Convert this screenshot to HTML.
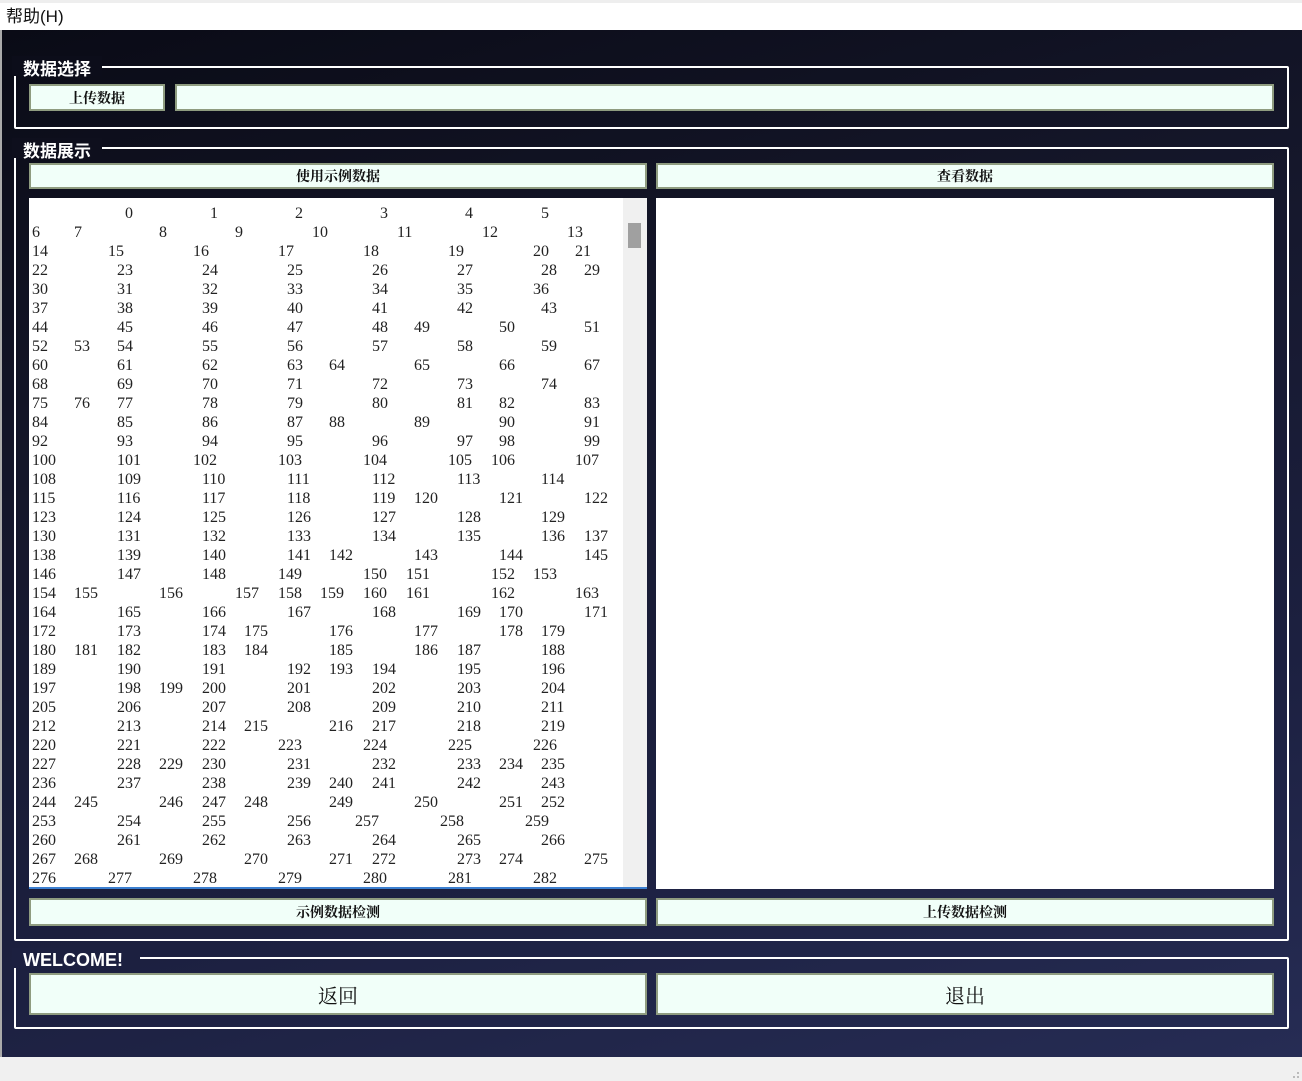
<!DOCTYPE html>
<html><head><meta charset="utf-8"><style>
*{margin:0;padding:0;box-sizing:border-box}
body{width:1302px;height:1081px;position:relative;overflow:hidden;background:#f0f0f0;font-family:"Liberation Sans","Noto Sans CJK SC",sans-serif}
.menu{position:absolute;left:0;top:0;width:1302px;height:30px;background:#fff;border-top:3px solid #eeeeee;font-size:17px;color:#111;padding:3px 0 0 6px;line-height:22px}
.bg{position:absolute;left:0;top:30px;width:1302px;height:1027px;background:linear-gradient(165deg,#0a0b16 0%,#15172b 35%,#1c2040 70%,#262c54 100%);border-left:2px solid #aaa}
.gb{position:absolute;border:2px solid #fff;border-radius:2px}
.t{position:absolute;color:#fff;font-weight:bold;font-size:17px;font-family:"Noto Sans CJK SC","Liberation Sans",sans-serif;line-height:20px}
.tw{position:absolute;height:20px}
.btn{position:absolute;background:#f1fff9;border:2px solid #8f9c80;display:flex;align-items:center;justify-content:center;font-family:"Noto Serif CJK SC",serif;font-weight:bold;font-size:14px;color:#111}
.ta{position:absolute;left:29px;top:198px;width:618px;height:691px;background:#fff;border-bottom:2px solid #3b7fd0;overflow:hidden;font-family:"Liberation Serif",serif;font-size:16px;color:#222}
.ta .r{position:absolute;left:0;height:19px;width:600px;margin-top:3px}
.ta span{position:absolute;top:0;line-height:19px}
.sb{position:absolute;left:594px;top:0;width:24px;height:689px;background:#f0f0f0}
.th{position:absolute;left:5px;top:25px;width:13px;height:25px;background:#a0a0a0}
</style></head><body>
<div class="menu">帮助(H)</div>
<div class="bg"></div>
<div class="gb" style="left:14px;top:66px;width:1275px;height:63px"></div>
<div class="tw" style="left:12px;top:56px;width:90px;background:#0c0d1a"></div>
<div class="t" style="left:23px;top:58px">数据选择</div>
<div class="btn" style="left:29px;top:84px;width:136px;height:27px">上传数据</div>
<div class="btn" style="left:175px;top:84px;width:1099px;height:27px"></div>
<div class="gb" style="left:14px;top:147px;width:1275px;height:794px"></div>
<div class="tw" style="left:12px;top:138px;width:90px;background:#0e0f1d"></div>
<div class="t" style="left:23px;top:140px">数据展示</div>
<div class="btn" style="left:29px;top:163px;width:618px;height:26px">使用示例数据</div>
<div class="btn" style="left:656px;top:163px;width:618px;height:26px">查看数据</div>
<div style="position:absolute;left:656px;top:198px;width:618px;height:691px;background:#fff"></div>
<div class="btn" style="left:29px;top:898px;width:618px;height:28px">示例数据检测</div>
<div class="btn" style="left:656px;top:898px;width:618px;height:28px">上传数据检测</div>
<div class="gb" style="left:14px;top:957px;width:1275px;height:72px"></div>
<div class="tw" style="left:12px;top:948px;width:128px;background:#1c2040"></div>
<div class="t" style="left:23px;top:950px;font-family:'Liberation Sans',sans-serif;font-size:18px">WELCOME!</div>
<div class="btn" style="left:29px;top:973px;width:618px;height:42px;font-size:20px;font-weight:normal">返回</div>
<div class="btn" style="left:656px;top:973px;width:618px;height:42px;font-size:20px;font-weight:normal">退出</div>
<div style="position:absolute;right:3px;bottom:3px;width:6px;height:6px;border-right:2px dotted #bbb;border-bottom:2px dotted #bbb"></div>

<div class="ta">
<div class="r" style="top:3px"><span style="left:96px">0</span><span style="left:181px">1</span><span style="left:266px">2</span><span style="left:351px">3</span><span style="left:436px">4</span><span style="left:512px">5</span></div>
<div class="r" style="top:22px"><span style="left:3px">6</span><span style="left:45px">7</span><span style="left:130px">8</span><span style="left:206px">9</span><span style="left:283px">10</span><span style="left:368px">11</span><span style="left:453px">12</span><span style="left:538px">13</span></div>
<div class="r" style="top:41px"><span style="left:3px">14</span><span style="left:79px">15</span><span style="left:164px">16</span><span style="left:249px">17</span><span style="left:334px">18</span><span style="left:419px">19</span><span style="left:504px">20</span><span style="left:546px">21</span></div>
<div class="r" style="top:60px"><span style="left:3px">22</span><span style="left:88px">23</span><span style="left:173px">24</span><span style="left:258px">25</span><span style="left:343px">26</span><span style="left:428px">27</span><span style="left:512px">28</span><span style="left:555px">29</span></div>
<div class="r" style="top:79px"><span style="left:3px">30</span><span style="left:88px">31</span><span style="left:173px">32</span><span style="left:258px">33</span><span style="left:343px">34</span><span style="left:428px">35</span><span style="left:504px">36</span></div>
<div class="r" style="top:98px"><span style="left:3px">37</span><span style="left:88px">38</span><span style="left:173px">39</span><span style="left:258px">40</span><span style="left:343px">41</span><span style="left:428px">42</span><span style="left:512px">43</span></div>
<div class="r" style="top:117px"><span style="left:3px">44</span><span style="left:88px">45</span><span style="left:173px">46</span><span style="left:258px">47</span><span style="left:343px">48</span><span style="left:385px">49</span><span style="left:470px">50</span><span style="left:555px">51</span></div>
<div class="r" style="top:136px"><span style="left:3px">52</span><span style="left:45px">53</span><span style="left:88px">54</span><span style="left:173px">55</span><span style="left:258px">56</span><span style="left:343px">57</span><span style="left:428px">58</span><span style="left:512px">59</span></div>
<div class="r" style="top:155px"><span style="left:3px">60</span><span style="left:88px">61</span><span style="left:173px">62</span><span style="left:258px">63</span><span style="left:300px">64</span><span style="left:385px">65</span><span style="left:470px">66</span><span style="left:555px">67</span></div>
<div class="r" style="top:174px"><span style="left:3px">68</span><span style="left:88px">69</span><span style="left:173px">70</span><span style="left:258px">71</span><span style="left:343px">72</span><span style="left:428px">73</span><span style="left:512px">74</span></div>
<div class="r" style="top:193px"><span style="left:3px">75</span><span style="left:45px">76</span><span style="left:88px">77</span><span style="left:173px">78</span><span style="left:258px">79</span><span style="left:343px">80</span><span style="left:428px">81</span><span style="left:470px">82</span><span style="left:555px">83</span></div>
<div class="r" style="top:212px"><span style="left:3px">84</span><span style="left:88px">85</span><span style="left:173px">86</span><span style="left:258px">87</span><span style="left:300px">88</span><span style="left:385px">89</span><span style="left:470px">90</span><span style="left:555px">91</span></div>
<div class="r" style="top:231px"><span style="left:3px">92</span><span style="left:88px">93</span><span style="left:173px">94</span><span style="left:258px">95</span><span style="left:343px">96</span><span style="left:428px">97</span><span style="left:470px">98</span><span style="left:555px">99</span></div>
<div class="r" style="top:250px"><span style="left:3px">100</span><span style="left:88px">101</span><span style="left:164px">102</span><span style="left:249px">103</span><span style="left:334px">104</span><span style="left:419px">105</span><span style="left:462px">106</span><span style="left:546px">107</span></div>
<div class="r" style="top:269px"><span style="left:3px">108</span><span style="left:88px">109</span><span style="left:173px">110</span><span style="left:258px">111</span><span style="left:343px">112</span><span style="left:428px">113</span><span style="left:512px">114</span></div>
<div class="r" style="top:288px"><span style="left:3px">115</span><span style="left:88px">116</span><span style="left:173px">117</span><span style="left:258px">118</span><span style="left:343px">119</span><span style="left:385px">120</span><span style="left:470px">121</span><span style="left:555px">122</span></div>
<div class="r" style="top:307px"><span style="left:3px">123</span><span style="left:88px">124</span><span style="left:173px">125</span><span style="left:258px">126</span><span style="left:343px">127</span><span style="left:428px">128</span><span style="left:512px">129</span></div>
<div class="r" style="top:326px"><span style="left:3px">130</span><span style="left:88px">131</span><span style="left:173px">132</span><span style="left:258px">133</span><span style="left:343px">134</span><span style="left:428px">135</span><span style="left:512px">136</span><span style="left:555px">137</span></div>
<div class="r" style="top:345px"><span style="left:3px">138</span><span style="left:88px">139</span><span style="left:173px">140</span><span style="left:258px">141</span><span style="left:300px">142</span><span style="left:385px">143</span><span style="left:470px">144</span><span style="left:555px">145</span></div>
<div class="r" style="top:364px"><span style="left:3px">146</span><span style="left:88px">147</span><span style="left:173px">148</span><span style="left:249px">149</span><span style="left:334px">150</span><span style="left:377px">151</span><span style="left:462px">152</span><span style="left:504px">153</span></div>
<div class="r" style="top:383px"><span style="left:3px">154</span><span style="left:45px">155</span><span style="left:130px">156</span><span style="left:206px">157</span><span style="left:249px">158</span><span style="left:291px">159</span><span style="left:334px">160</span><span style="left:377px">161</span><span style="left:462px">162</span><span style="left:546px">163</span></div>
<div class="r" style="top:402px"><span style="left:3px">164</span><span style="left:88px">165</span><span style="left:173px">166</span><span style="left:258px">167</span><span style="left:343px">168</span><span style="left:428px">169</span><span style="left:470px">170</span><span style="left:555px">171</span></div>
<div class="r" style="top:421px"><span style="left:3px">172</span><span style="left:88px">173</span><span style="left:173px">174</span><span style="left:215px">175</span><span style="left:300px">176</span><span style="left:385px">177</span><span style="left:470px">178</span><span style="left:512px">179</span></div>
<div class="r" style="top:440px"><span style="left:3px">180</span><span style="left:45px">181</span><span style="left:88px">182</span><span style="left:173px">183</span><span style="left:215px">184</span><span style="left:300px">185</span><span style="left:385px">186</span><span style="left:428px">187</span><span style="left:512px">188</span></div>
<div class="r" style="top:459px"><span style="left:3px">189</span><span style="left:88px">190</span><span style="left:173px">191</span><span style="left:258px">192</span><span style="left:300px">193</span><span style="left:343px">194</span><span style="left:428px">195</span><span style="left:512px">196</span></div>
<div class="r" style="top:478px"><span style="left:3px">197</span><span style="left:88px">198</span><span style="left:130px">199</span><span style="left:173px">200</span><span style="left:258px">201</span><span style="left:343px">202</span><span style="left:428px">203</span><span style="left:512px">204</span></div>
<div class="r" style="top:497px"><span style="left:3px">205</span><span style="left:88px">206</span><span style="left:173px">207</span><span style="left:258px">208</span><span style="left:343px">209</span><span style="left:428px">210</span><span style="left:512px">211</span></div>
<div class="r" style="top:516px"><span style="left:3px">212</span><span style="left:88px">213</span><span style="left:173px">214</span><span style="left:215px">215</span><span style="left:300px">216</span><span style="left:343px">217</span><span style="left:428px">218</span><span style="left:512px">219</span></div>
<div class="r" style="top:535px"><span style="left:3px">220</span><span style="left:88px">221</span><span style="left:173px">222</span><span style="left:249px">223</span><span style="left:334px">224</span><span style="left:419px">225</span><span style="left:504px">226</span></div>
<div class="r" style="top:554px"><span style="left:3px">227</span><span style="left:88px">228</span><span style="left:130px">229</span><span style="left:173px">230</span><span style="left:258px">231</span><span style="left:343px">232</span><span style="left:428px">233</span><span style="left:470px">234</span><span style="left:512px">235</span></div>
<div class="r" style="top:573px"><span style="left:3px">236</span><span style="left:88px">237</span><span style="left:173px">238</span><span style="left:258px">239</span><span style="left:300px">240</span><span style="left:343px">241</span><span style="left:428px">242</span><span style="left:512px">243</span></div>
<div class="r" style="top:592px"><span style="left:3px">244</span><span style="left:45px">245</span><span style="left:130px">246</span><span style="left:173px">247</span><span style="left:215px">248</span><span style="left:300px">249</span><span style="left:385px">250</span><span style="left:470px">251</span><span style="left:512px">252</span></div>
<div class="r" style="top:611px"><span style="left:3px">253</span><span style="left:88px">254</span><span style="left:173px">255</span><span style="left:258px">256</span><span style="left:326px">257</span><span style="left:411px">258</span><span style="left:496px">259</span></div>
<div class="r" style="top:630px"><span style="left:3px">260</span><span style="left:88px">261</span><span style="left:173px">262</span><span style="left:258px">263</span><span style="left:343px">264</span><span style="left:428px">265</span><span style="left:512px">266</span></div>
<div class="r" style="top:649px"><span style="left:3px">267</span><span style="left:45px">268</span><span style="left:130px">269</span><span style="left:215px">270</span><span style="left:300px">271</span><span style="left:343px">272</span><span style="left:428px">273</span><span style="left:470px">274</span><span style="left:555px">275</span></div>
<div class="r" style="top:668px"><span style="left:3px">276</span><span style="left:79px">277</span><span style="left:164px">278</span><span style="left:249px">279</span><span style="left:334px">280</span><span style="left:419px">281</span><span style="left:504px">282</span></div>
<div class="sb"><div class="th"></div></div>
</div>
</body></html>
